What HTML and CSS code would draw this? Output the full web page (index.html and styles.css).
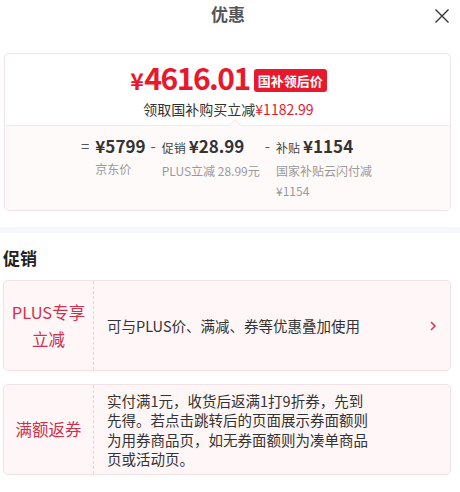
FILE: index.html
```html
<!DOCTYPE html>
<html>
<head>
    <meta charset="UTF-8">
    <title>优惠</title>
    <link rel="stylesheet" href="styles.css">
</head>
<body>
    <div class="header">
        <span class="title">优惠</span>
        <span class="close">
            <svg width="16" height="16" viewBox="0 0 16 16"><path d="M1.5 1.5L14.5 14.5M14.5 1.5L1.5 14.5" stroke="#333" stroke-width="1.4" fill="none"/></svg>
        </span>
    </div>

    <div class="price_card">
        <div class="price_top">
            <div class="price_line">
                <span class="price"><em>¥</em>4616.01</span>
                <span class="badge">国补领后价</span>
            </div>
            <div class="price_sub">领取国补购买立减<span class="red">¥1182.99</span></div>
        </div>
        <div class="price_bottom">
            <div class="calc">
                <div class="calc_item">
                    <span class="op">=</span>
                    <div class="calc_body">
                        <div class="calc_val"><b>¥5799</b></div>
                        <div class="calc_note">京东价</div>
                    </div>
                </div>
                <div class="calc_item">
                    <span class="op">-</span>
                    <div class="calc_body">
                        <div class="calc_val"><i>促销</i><b>¥28.99</b></div>
                        <div class="calc_note">PLUS立减 28.99元</div>
                    </div>
                </div>
                <div class="calc_item">
                    <span class="op">-</span>
                    <div class="calc_body narrow">
                        <div class="calc_val"><i>补贴</i><b>¥1154</b></div>
                        <div class="calc_note">国家补贴云闪付减¥1154</div>
                    </div>
                </div>
            </div>
        </div>
    </div>

    <div class="band"></div>

    <h3 class="sec_title">促销</h3>

    <div class="promo">
        <div class="promo_tag">PLUS专享<br>立减</div>
        <div class="promo_text">可与PLUS价、满减、券等优惠叠加使用</div>
        <div class="promo_arrow">
            <svg width="8" height="12" viewBox="0 0 8 12"><path d="M2 2L6 6L2 10" stroke="#d2344c" stroke-width="1.5" fill="none"/></svg>
        </div>
    </div>

    <div class="promo">
        <div class="promo_tag">满额返券</div>
        <div class="promo_text">实付满1元，收货后返满1打9折券，先到<br>先得。若点击跳转后的页面展示券面额则<br>为用券商品页，如无券面额则为凑单商品<br>页或活动页。</div>
        <div class="promo_arrow"></div>
    </div>
</body>
</html>
```

FILE: styles.css
```css
*{
    margin: 0;
    padding: 0;
}
body{
    width: 460px;
    background: #fff;
    font-family: "Noto Sans CJK SC", "Noto Sans", sans-serif;
    color: #333;
}
.header{
    height: 26px;
    display: flex;
    justify-content: center;
    align-items: center;
    position: relative;
}
.title{
    font-size: 17px;
    font-weight: bold;
    color: #555;
    margin-left: -4px;
}
.close{
    position: absolute;
    right: 10px;
    top: 5px;
    width: 16px;
    height: 16px;
}
.price_card{
    margin: 27px 9px 0 4px;
    border: 1px solid #f0e4e6;
    border-radius: 5px;
    overflow: hidden;
}
.price_top{
    height: 71px;
    display: flex;
    flex-direction: column;
    align-items: center;
    padding-left: 2px;
}
.price_line{
    display: flex;
    align-items: center;
    height: 44px;
    padding-top: 2px;
}
.price{
    color: #e8192c;
    font-size: 30px;
    font-weight: 600;
    line-height: 36px;
    letter-spacing: -1.5px;
}
.price em{
    font-style: normal;
    font-size: 23px;
    margin-right: 2px;
}
.badge{
    margin: 5px 0 0 4px;
    background: #e8192c;
    color: #fff;
    font-size: 13px;
    font-weight: bold;
    line-height: 23px;
    padding: 0 4px;
    border-radius: 3px;
}
.price_sub{
    font-size: 14px;
    line-height: 20px;
    margin-top: -1px;
}
.red{
    color: #e8192c;
}
.price_bottom{
    height: 84px;
    background: #fffafa;
    border-top: 1px solid #f7e9eb;
    position: relative;
}
.price_bottom:before{
    content: "";
    position: absolute;
    left: 226px;
    top: -5px;
    width: 7px;
    height: 7px;
    background: #fffafa;
    border-left: 1px solid #f7e9eb;
    border-top: 1px solid #f7e9eb;
    transform: rotate(45deg);
}
.calc{
    display: flex;
    padding: 8px 0 0 76px;
}
.calc_item{
    display: flex;
    margin-right: 5px;
}
.op{
    font-size: 15px;
    color: #555;
    line-height: 24px;
    margin-right: 6px;
}
.calc_body{
    display: flex;
    flex-direction: column;
}
.calc_body.narrow{
    width: 97px;
}
.calc_val{
    line-height: 24px;
    white-space: nowrap;
}
.calc_val b{
    font-size: 17px;
    font-weight: 600;
    color: #333;
}
.calc_val i{
    font-style: normal;
    font-size: 12px;
    color: #444;
    margin-right: 3px;
}
.calc_note{
    font-size: 12px;
    color: #999;
    line-height: 20px;
    margin-top: 1px;
}
.band{
    height: 6px;
    background: #f6f7fb;
    margin-top: 16px;
}
.sec_title{
    font-size: 17px;
    font-weight: bold;
    color: #222;
    line-height: 24px;
    margin: 13px 0 0 3px;
}
.promo{
    display: flex;
    margin: 10px 9px 0 3px;
    min-height: 89px;
    background: #fff6f7;
    border: 1px solid #f3e1e4;
    border-radius: 5px;
}
.promo + .promo{
    margin-top: 13px;
}
.promo_tag{
    width: 89px;
    border-right: 1px dashed #ecd2d6;
    color: #d3304b;
    font-size: 16.5px;
    line-height: 27px;
    display: flex;
    align-items: center;
    justify-content: center;
    text-align: center;
}
.promo_text{
    flex: 1;
    padding: 0 0 0 13px;
    font-size: 14.5px;
    line-height: 19.5px;
    color: #333;
    display: flex;
    align-items: center;
}
.promo_arrow{
    width: 54px;
    display: flex;
    align-items: center;
    justify-content: flex-end;
    padding-right: 13px;
    box-sizing: border-box;
    flex-shrink: 0;
}
```
